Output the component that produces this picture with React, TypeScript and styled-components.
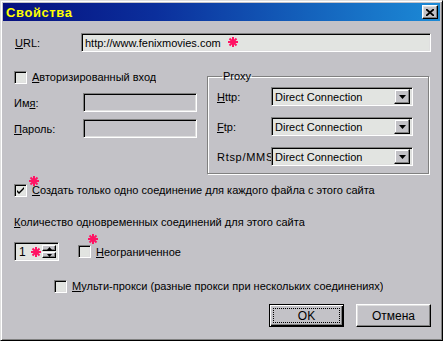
import React from "react";
import styled, { createGlobalStyle } from "styled-components";

const BG = "#c3c2c7";
const FIELD = "#e2e4e1";

const Global = createGlobalStyle`
  html, body { margin: 0; padding: 0; background: ${BG}; }
  body { font-family: "Liberation Sans", Arial, sans-serif; font-size: 11px; color: #000; }
  * { box-sizing: border-box; }
`;

const Window = styled.div`
  width: 443px;
  height: 341px;
  background: ${BG};
  border: 1px solid;
  border-color: #dfdfdf #000 #000 #dfdfdf;
  box-shadow: inset 1px 1px #fff, inset -1px -1px #808080;
  padding: 2px;
  display: flex;
  flex-direction: column;
`;

const TitleBar = styled.div`
  height: 18px;
  flex: none;
  display: flex;
  align-items: center;
  justify-content: space-between;
  padding: 0 2px 0 3px;
  background: linear-gradient(90deg, #06107e 0%, #0b2f9c 35%, #1462bc 70%, #1c8ad6 100%);
`;

const Title = styled.span`
  color: #ffff00;
  font-weight: bold;
  font-size: 13px;
  letter-spacing: 0.6px;
`;

const CloseButton = styled.div`
  width: 16px;
  height: 14px;
  background: ${BG};
  border: 1px solid;
  border-color: #fff #000 #000 #fff;
  box-shadow: inset -1px -1px #808080, inset 1px 1px #dfdfdf;
  display: flex;
  align-items: center;
  justify-content: center;
`;

const Content = styled.div`
  flex: 1;
  display: flex;
  flex-direction: column;
  padding: 0 9px 0 11px;
`;

const Row = styled.div<{ $top: number; $h: number; $indent?: number }>`
  display: flex;
  align-items: center;
  margin-top: ${(p) => p.$top}px;
  height: ${(p) => p.$h}px;
  padding-left: ${(p) => p.$indent ?? 0}px;
  position: relative;
`;

const Label = styled.span<{ $w?: number; $pad?: number; $spacing?: number }>`
  flex: none;
  width: ${(p) => (p.$w ? `${p.$w}px` : "auto")};
  padding-left: ${(p) => p.$pad ?? 0}px;
  letter-spacing: ${(p) => p.$spacing ?? 0}px;
  white-space: nowrap;
  overflow: hidden;
`;

const Key = styled.span`
  text-decoration: underline;
  text-underline-offset: 1px;
`;

const Sunken = styled.div<{ $w?: number; $disabled?: boolean }>`
  height: 100%;
  flex: ${(p) => (p.$w ? "none" : "1")};
  width: ${(p) => (p.$w ? `${p.$w}px` : "auto")};
  background: ${(p) => (p.$disabled ? BG : FIELD)};
  border: 1px solid;
  border-color: #808080 #fff #fff #808080;
  box-shadow: inset 1px 1px #000, inset -1px -1px #dfdfdf;
  display: flex;
  align-items: center;
  padding: 0 2px 0 3px;
  white-space: nowrap;
  position: relative;
`;

const Middle = styled.div`
  display: flex;
  align-items: flex-start;
  margin-top: 17px;
`;

const LeftCol = styled.div`
  width: 183px;
  display: flex;
  flex-direction: column;
  margin-right: 10px;
`;

const Group = styled.fieldset`
  width: 222px;
  margin: 0;
  padding: 4px 0 7px 9px;
  border: 1px solid #808080;
  box-shadow: inset 1px 1px #fff, 1px 1px #fff;
  display: flex;
  flex-direction: column;
  gap: 11px;
`;

const Legend = styled.legend`
  margin-left: 5px;
  padding: 0 1px;
  line-height: 14px;
  height: 14px;
`;

const ProxyRow = styled.div`
  display: flex;
  align-items: center;
  height: 19px;
`;

const Select = styled(Sunken)`
  padding-right: 2px;
  justify-content: space-between;
`;

const DropButton = styled.div`
  width: 16px;
  height: 15px;
  background: ${BG};
  border: 1px solid;
  border-color: #dfdfdf #000 #000 #dfdfdf;
  box-shadow: inset -1px -1px #808080, inset 1px 1px #fff;
  display: flex;
  align-items: center;
  justify-content: center;
`;

const Box = styled.div`
  width: 13px;
  height: 13px;
  flex: none;
  background: ${FIELD};
  border: 1px solid;
  border-color: #808080 #fff #fff #808080;
  box-shadow: inset 1px 1px #000, inset -1px -1px #dfdfdf;
  display: flex;
  align-items: center;
  justify-content: center;
  margin-right: 5px;
`;

const Spin = styled(Sunken)`
  padding: 2px 2px 2px 4px;
  justify-content: space-between;
  font-size: 12px;
`;

const SpinButtons = styled.div`
  display: flex;
  flex-direction: column;
  gap: 1px;
  height: 100%;
`;

const SpinButton = styled.div`
  width: 14px;
  flex: 1;
  background: ${BG};
  border: 1px solid;
  border-color: #fff #000 #000 #fff;
  box-shadow: inset -1px -1px #808080;
  display: flex;
  align-items: center;
  justify-content: center;
`;

const Buttons = styled.div`
  display: flex;
  justify-content: flex-end;
  gap: 12px;
  margin-top: 10px;
`;

const Button = styled.div<{ $default?: boolean }>`
  width: 75px;
  height: 23px;
  background: ${BG};
  border: 1px solid;
  border-color: ${(p) => (p.$default ? "#000" : "#fff #000 #000 #fff")};
  box-shadow: ${(p) =>
    p.$default
      ? "inset 1px 1px #fff, inset -1px -1px #000, inset -2px -2px #808080"
      : "inset -1px -1px #808080, inset 1px 1px #dfdfdf"};
  display: flex;
  align-items: center;
  justify-content: center;
  padding: 3px;
  font-size: 12px;
`;

const Focus = styled.div`
  width: 100%;
  height: 100%;
  border: 1px dotted #000;
  display: flex;
  align-items: center;
  justify-content: center;
`;

const Mark = styled.span<{ $x: number; $y: number }>`
  position: absolute;
  left: ${(p) => p.$x}px;
  top: ${(p) => p.$y}px;
  width: 10px;
  height: 10px;
  display: block;
  line-height: 0;
`;

const Asterisk = ({ x, y }: { x: number; y: number }) => (
  <Mark $x={x} $y={y}>
    <svg width="10" height="10" viewBox="0 0 10 10">
      <g stroke="#ff1464" strokeWidth="2" strokeLinecap="butt">
        <line x1="5" y1="0" x2="5" y2="10" />
        <line x1="0" y1="5" x2="10" y2="5" />
        <line x1="1.5" y1="1.5" x2="8.5" y2="8.5" />
        <line x1="8.5" y1="1.5" x2="1.5" y2="8.5" />
      </g>
    </svg>
  </Mark>
);

const Tri = ({ w, h, down = true }: { w: number; h: number; down?: boolean }) => (
  <svg width={w} height={h} viewBox={`0 0 ${w} ${h}`}>
    <polygon points={down ? `0,0 ${w},0 ${w / 2},${h}` : `0,${h} ${w},${h} ${w / 2},0`} fill="#000" />
  </svg>
);

const Check = () => (
  <svg width="9" height="9" viewBox="0 0 9 9">
    <path d="M1 4 L3 6 L8 1 L8 3 L3 8 L1 6 Z" fill="#000" />
  </svg>
);

const CheckRow = ({
  checked,
  children,
  top,
  indent,
}: {
  checked?: boolean;
  children: React.ReactNode;
  top: number;
  indent?: number;
}) => (
  <Row $top={top} $h={16} $indent={indent}>
    <Box>{checked && <Check />}</Box>
    <Label>{children}</Label>
  </Row>
);

const ProxySelect = ({ label, spacing }: { label: React.ReactNode; spacing?: number }) => (
  <ProxyRow>
    <Label $w={54} $spacing={spacing}>
      {label}
    </Label>
    <Select $w={142}>
      <span>Direct Connection</span>
      <DropButton>
        <Tri w={7} h={4} />
      </DropButton>
    </Select>
  </ProxyRow>
);

export default function App() {
  return (
    <>
      <Global />
      <Window>
        <TitleBar>
          <Title>Свойства</Title>
          <CloseButton>
            <svg width="8" height="7" viewBox="0 0 8 7">
              <path d="M0 0 L8 7 M8 0 L0 7" stroke="#000" strokeWidth="1.8" />
            </svg>
          </CloseButton>
        </TitleBar>
        <Content>
          <Row $top={12} $h={19}>
            <Label $w={67} $pad={1}>
              <Key>U</Key>RL:
            </Label>
            <Sunken>
              <span>http://www.fenixmovies.com</span>
              <Asterisk x={146} y={3} />
            </Sunken>
          </Row>

          <Middle>
            <LeftCol>
              <CheckRow top={0}>
                <Key>А</Key>вторизированный вход
              </CheckRow>
              <Row $top={8} $h={19}>
                <Label $w={69}>
                  Им<Key>я</Key>:
                </Label>
                <Sunken $w={114} $disabled />
              </Row>
              <Row $top={7} $h={19}>
                <Label $w={69}>
                  <Key>П</Key>ароль:
                </Label>
                <Sunken $w={114} $disabled />
              </Row>
            </LeftCol>
            <Group>
              <Legend>Proxy</Legend>
              <ProxySelect
                label={
                  <>
                    <Key>H</Key>ttp:
                  </>
                }
              />
              <ProxySelect
                label={
                  <>
                    <Key>F</Key>tp:
                  </>
                }
              />
              <ProxySelect label="Rtsp/MMS" spacing={0.7} />
            </Group>
          </Middle>

          <Row $top={8} $h={16}>
            <Box>
              <Check />
            </Box>
            <Label>
              <Key>С</Key>оздать только одно соединение для каждого файла с этого сайта
            </Label>
            <Asterisk x={15} y={-6} />
          </Row>

          <Row $top={16} $h={16}>
            <Label>
              <Key>К</Key>оличество одновременных соединений для этого сайта
            </Label>
          </Row>

          <Row $top={12} $h={19}>
            <Spin $w={45}>
              <span>1</span>
              <Asterisk x={16} y={4} />
              <SpinButtons>
                <SpinButton>
                  <Tri w={5} h={3} down={false} />
                </SpinButton>
                <SpinButton>
                  <Tri w={5} h={3} />
                </SpinButton>
              </SpinButtons>
            </Spin>
            <Row $top={0} $h={16} $indent={19}>
              <Box />
              <Label>
                <Key>Н</Key>еограниченное
              </Label>
              <Asterisk x={29} y={-10} />
            </Row>
          </Row>

          <CheckRow top={17} indent={40}>
            <Key>М</Key>ульти-прокси (разные прокси при нескольких соединениях)
          </CheckRow>

          <Buttons>
            <Button $default>
              <Focus>OK</Focus>
            </Button>
            <Button>Отмена</Button>
          </Buttons>
        </Content>
      </Window>
    </>
  );
}
